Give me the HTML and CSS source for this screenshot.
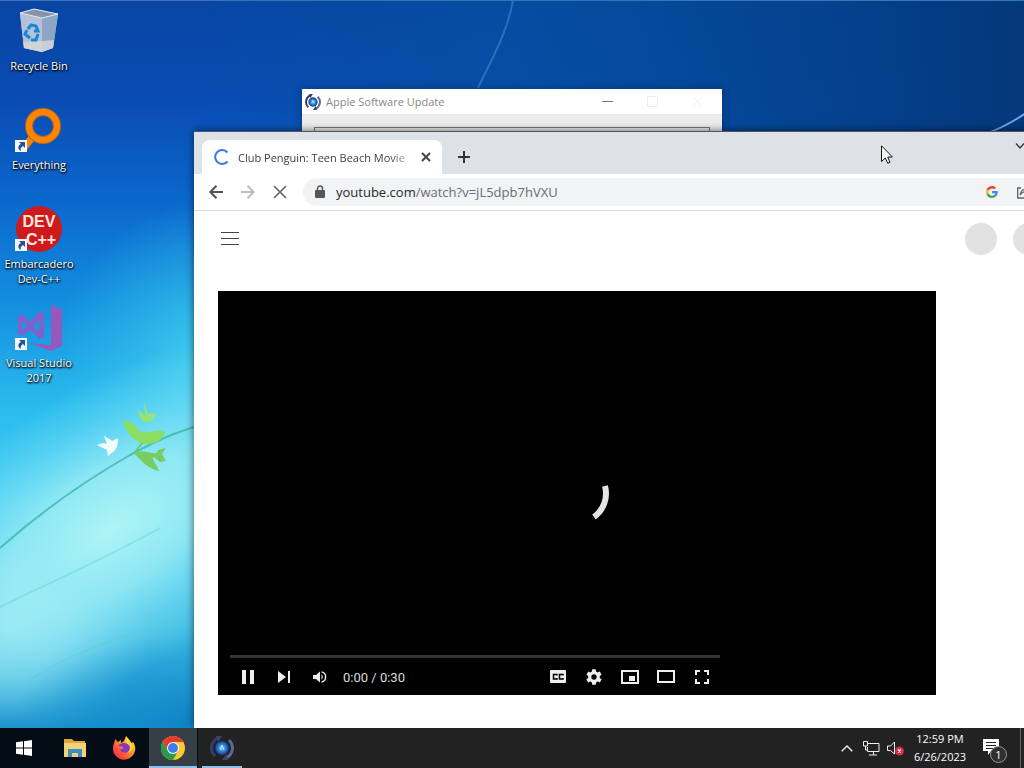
FILE: index.html
```html
<!DOCTYPE html>
<html lang="en">
<head>
  <meta charset="UTF-8" />
  <title>Desktop</title>
  <meta name="viewport" content="width=device-width, initial-scale=1.0" />
  <link rel="stylesheet" href="styles.css">
</head>
<body>
  <main class="desktop">
    <svg class="wallpaper" viewBox="0 0 1024 728" preserveAspectRatio="xMinYMin slice" aria-hidden="true">
      <defs>
        <linearGradient id="sky" x1="0" y1="0" x2="0" y2="1">
          <stop offset="0" stop-color="#0845a3" />
          <stop offset=".14" stop-color="#0a4cb4" />
          <stop offset=".28" stop-color="#0b68cd" />
          <stop offset=".42" stop-color="#148fdf" />
          <stop offset=".56" stop-color="#2abcee" />
          <stop offset=".7" stop-color="#47cef2" />
          <stop offset=".86" stop-color="#3fbce5" />
          <stop offset="1" stop-color="#168bca" />
        </linearGradient>
        <linearGradient id="dusk" x1="0" y1="0" x2="1" y2="0">
          <stop offset=".2" stop-color="#04509c" stop-opacity="0" />
          <stop offset=".5" stop-color="#0450a0" stop-opacity=".7" />
          <stop offset=".8" stop-color="#04418c" stop-opacity=".9" />
          <stop offset="1" stop-color="#04387a" />
        </linearGradient>
        <radialGradient id="glow">
          <stop offset="0" stop-color="#b4f7f5" stop-opacity=".95" />
          <stop offset=".4" stop-color="#a6f1f6" stop-opacity=".75" />
          <stop offset=".7" stop-color="#96ecf8" stop-opacity=".35" />
          <stop offset="1" stop-color="#8feaf8" stop-opacity="0" />
        </radialGradient>
        <radialGradient id="lagoon">
          <stop offset="0" stop-color="#4ad6f0" stop-opacity=".85" />
          <stop offset="1" stop-color="#35c8ee" stop-opacity="0" />
        </radialGradient>
        <radialGradient id="deep">
          <stop offset="0" stop-color="#0f83c6" />
          <stop offset="1" stop-color="#1f9fd6" stop-opacity="0" />
        </radialGradient>
        <filter id="soft"><feGaussianBlur stdDeviation=".7" /></filter>
      </defs>
      <rect width="1024" height="728" fill="url(#sky)" />
      <rect width="1024" height="300" fill="url(#dusk)" />
      <ellipse cx="215" cy="360" rx="160" ry="160" fill="url(#lagoon)" />
      <ellipse cx="110" cy="530" rx="280" ry="140" transform="rotate(-34 110 530)" fill="url(#glow)" />
      <ellipse cx="10" cy="630" rx="140" ry="110" fill="url(#glow)" opacity=".6" />
      <ellipse cx="190" cy="725" rx="180" ry="90" fill="url(#deep)" />
      <g filter="url(#soft)">
        <path d="M0 548C45 508 90 478 130 455C158 440 172 434 194 427" fill="none" stroke="#3cb8a4" stroke-width="2" opacity=".8" />
        <path d="M135 452L146 438" stroke="#6fc870" stroke-width="2" />
        <path d="M0 607C60 578 110 556 160 528M30 680C90 640 150 632 194 612" fill="none" stroke="#55cfc9" stroke-width="2" opacity=".35" />
        <path d="M123 421C128 420 135 424 140 431C147 436 157 427 165 432C163 440 156 444 148 444C138 444 126 435 123 421Z" fill="#8cde62" />
        <path d="M138 409L145 416L144 402L148 414L156 413C154 421 149 423 145 422C141 420 139 416 138 409Z" fill="#97e56f" />
        <path d="M134 453C143 449 150 454 157 453L158 450L166 448L162 454L166 461L160 462L154 457C150 457 157 465 159 471C149 469 142 462 134 453Z" fill="#77cd5e" />
        <path d="M97 445C102 443 105 443 107 444L104 436C109 439 110 439 112 441L118 438C118 444 117 449 113 452L108 456L107 450Z" fill="#f1fdff" />
      </g>
      <path d="M513 0C507 34 492 58 478 88" fill="none" stroke="#4b93d2" stroke-width="2" opacity=".5" />
      <path d="M988 133C1004 127 1014 121 1026 113" fill="none" stroke="#6aa5e6" stroke-width="2" />
      <rect width="1024" height="1" fill="#3a74b8" />
    </svg>

    <nav class="shortcuts" aria-label="Desktop shortcuts">
      <a class="shortcut" href="#recycle-bin">
        <svg viewBox="0 0 48 48" aria-hidden="true">
          <path d="M5 6L19 2L43 7L38 41L27 45L9 41Z" fill="#aebfd6" />
          <path d="M5 7L27 11V45L9 41Z" fill="#b3c2d8" />
          <path d="M27 11L43 7L38 41L27 45Z" fill="#8ea6c5" />
          <path d="M8 35L27 34L39 33L38 41L27 45L9 41Z" fill="#d8d9d6" opacity=".8" />
          <path d="M5 6L19 2L43 7L27 11Z" fill="#8794ac" stroke="#e3eaf1" />
          <path d="M13 22L16 18L21 19L23 24L19 24M23 27L21 33L16 33M15 31L10 27L12 23" fill="none" stroke="#1887d8" stroke-width="3" />
        </svg>
        <span>Recycle Bin</span>
      </a>
      <a class="shortcut" href="#everything">
        <svg viewBox="0 0 48 48" aria-hidden="true">
          <path d="M20 28L8 43" stroke="#ff8500" stroke-width="7" />
          <circle cx="28" cy="20" r="14" fill="none" stroke="#b66a22" stroke-width="8" />
          <circle cx="28" cy="20" r="14" fill="none" stroke="#ff8500" stroke-width="6" />
          <use href="#link-arrow" />
        </svg>
        <span>Everything</span>
      </a>
      <a class="shortcut" href="#dev-cpp">
        <svg viewBox="0 0 48 48" aria-hidden="true">
          <circle cx="24" cy="24" r="23" fill="#cf1a1d" />
          <g class="dev-letters"><text x="24" y="22">DEV</text><text x="26" y="40">C++</text></g>
          <use href="#link-arrow" />
        </svg>
        <span>Embarcadero Dev-C++</span>
      </a>
      <a class="shortcut" href="#visual-studio">
        <svg viewBox="0 0 48 48" aria-hidden="true">
          <path d="M36 1L47 5V42L36 47L14 39L36 41Z" fill="#9558bd" />
          <path d="M3 12L7 10L15 18L25 7L29 9V33L25 35L15 26L7 32L3 30ZM7 16V27L12 22ZM24 16L18 22L24 28Z" fill="#8160c9" fill-rule="evenodd" />
          <g id="link-arrow">
            <rect y="34" width="12" height="12" fill="#f4f7fb" />
            <path d="M4 36H10V42L8 40C6 41 5 43 6 45C2 43 3 39 6 38Z" fill="#274f9c" />
          </g>
        </svg>
        <span>Visual Studio 2017</span>
      </a>
    </nav>

    <section class="window updater" aria-label="Apple Software Update">
      <header class="updater-title">
        <svg width="16" height="16" viewBox="0 0 24 24" aria-hidden="true"><use href="#apple-update" /></svg>
        <h2>Apple Software Update</h2>
        <button aria-label="Minimize"><svg width="11" height="11"><path d="M0 5.500H11" stroke="#777" /></svg></button>
        <button aria-label="Maximize"><svg width="11" height="11"><path d="M.5.500H10.500V10.500H.5Z" fill="none" stroke="#ececec" /></svg></button>
        <button aria-label="Close"><svg width="11" height="11"><path d="M1 1L10 10M10 1L1 10" stroke="#f0f0f0" /></svg></button>
      </header>
      <div class="updater-panel"></div>
    </section>

    <section class="window browser" aria-label="Browser">
      <header class="tab-strip">
        <div class="tab">
          <svg width="16" height="16" viewBox="0 0 16 16" aria-hidden="true"><path d="M13.500 3.500A7 7 0 1 0 13.500 12.500" fill="none" stroke="#3b78e0" stroke-width="2" /></svg>
          <span class="tab-title">Club Penguin: Teen Beach Movie</span>
          <button aria-label="Close tab"><svg width="10" height="10"><path d="M1 1L9 9M9 1L1 9" stroke="#444" stroke-width="2" /></svg></button>
        </div>
        <button class="new-tab" aria-label="New tab"><svg width="12" height="12"><path d="M6 0V12M0 6H12" stroke="#333" stroke-width="2" /></svg></button>
        <div class="caption-buttons">
          <button aria-label="Search tabs"><svg width="10" height="6"><path d="M1 0.500L5 5L9 0.500" fill="none" stroke="#333" stroke-width="1.300" /></svg></button>
          <button aria-label="Minimize"></button>
          <button aria-label="Maximize"></button>
          <button aria-label="Close"></button>
        </div>
      </header>
      <div class="toolbar">
        <button aria-label="Back"><svg width="14" height="14"><path d="M14 7H1.500M7.500 .8L1.300 7L7.500 13.200" fill="none" stroke="#505357" stroke-width="2" /></svg></button>
        <button aria-label="Forward"><svg width="14" height="14"><path d="M0 7H12.500M6.500 .8L12.700 7L6.500 13.200" fill="none" stroke="#b9bbbe" stroke-width="2" /></svg></button>
        <button aria-label="Stop loading"><svg width="14" height="14"><path d="M1 1L13 13M13 1L1 13" stroke="#606368" stroke-width="1.600" /></svg></button>
        <div class="omnibox">
          <svg width="10" height="14" aria-hidden="true"><rect y="5" width="10" height="8" rx="1" fill="#54585d" /><path d="M2.500 6V3.500A2.500 2.500 0 0 1 7.500 3.500V6" fill="none" stroke="#54585d" stroke-width="1.500" /></svg>
          <a class="url" href="#watch">youtube.com<span>/watch?v=jL5dpb7hVXU</span></a>
          <button aria-label="Google">
            <svg width="12" height="12" viewBox="0 0 48 48">
              <path fill="#ea4335" d="M24 9.500c3.500 0 6.700 1.200 9.200 3.600l6.900-6.900C35.900 2.400 30.500 0 24 0 14.600 0 6.500 5.400 2.600 13.200l8 6.200C12.400 13.700 17.700 9.500 24 9.500z" />
              <path fill="#4285f4" d="M47 24.600c0-1.600-.2-3.100-.4-4.600H24v9h12.900c-.6 3-2.300 5.500-4.800 7.200l7.700 6C44.400 38 47 31.800 47 24.600z" />
              <path fill="#fbbc05" d="M10.500 28.600A14.500 14.500 0 0 1 10.500 19.400l-8-6.200a24 24 0 0 0 0 21.600z" />
              <path fill="#34a853" d="M24 48c6.500 0 12-2.100 15.900-5.800l-7.700-6c-2.200 1.500-5 2.300-8.200 2.300-6.300 0-11.600-4.200-13.500-9.900l-8 6.200C6.500 42.600 14.600 48 24 48z" />
            </svg>
          </button>
          <button aria-label="Share"><svg width="14" height="14"><path d="M4 3H.7V13H11V10M3 10C4 6 6 4 9 4V1L13 5L9 9V6.500C6 6.500 4.500 8 3 10" fill="none" stroke="#5f6368" stroke-width="1.300" /></svg></button>
          <button aria-label="Bookmark"></button>
        </div>
      </div>
      <div class="page">
        <div class="masthead">
          <button aria-label="Menu"><svg width="18" height="14"><path d="M0 .5H18M0 6.500H18M0 12.500H18" stroke="#444" /></svg></button>
          <i class="dot"></i><i class="dot"></i><i class="dot"></i><i class="dot"></i>
        </div>
        <div class="player">
          <svg class="spinner" width="66" height="66" viewBox="0 0 66 66" aria-hidden="true"><path d="M61 26A29 29 0 0 1 50 57" fill="none" stroke="#e4e4e4" stroke-width="6" /></svg>
          <div class="player-bottom">
            <div class="progress"></div>
            <div class="controls">
              <button aria-label="Pause"><svg width="12" height="14"><path d="M0 0H4V14H0ZM8 0H12V14H8Z" /></svg></button>
              <button aria-label="Next"><svg width="12" height="12"><path d="M0 0L8 6L0 12ZM10 0H12V12H10Z" /></svg></button>
              <button aria-label="Mute"><svg width="14" height="12"><path d="M0 4H3L7 .5V11.500L3 8H0ZM8.500 3Q11 6 8.500 9Z" /><path d="M8.500 .9C14 2 14 10 8.500 11.100" fill="none" stroke="#eee" stroke-width="1.400" /></svg></button>
              <span class="time">0:00 / 0:30</span>
              <button aria-label="Subtitles"><svg width="16" height="14"><rect width="16" height="13" rx="1" /><path d="M7 5.500V4.500H3.500V9H7V8M13 5.500V4.500H9.500V9H13V8" fill="none" stroke="#000" stroke-width="1.500" /></svg></button>
              <button aria-label="Settings"><svg width="16" height="16" viewBox="4 3 18 18"><path d="M19.400 13a7 7 0 0 0 0-2l2.100-1.600-2-3.500-2.500 1a7 7 0 0 0-1.700-1L15 3.300h-4l-.4 2.600a7 7 0 0 0-1.700 1l-2.400-1-2 3.500L6.500 11a7 7 0 0 0 0 2l-2.100 1.600 2 3.500 2.500-1a7 7 0 0 0 1.700 1l.4 2.600h4l.4-2.600a7 7 0 0 0 1.700-1l2.500 1 2-3.500zM13 15a3 3 0 1 1 0-6 3 3 0 0 1 0 6z" /></svg></button>
              <button aria-label="Miniplayer"><svg width="18" height="14"><path d="M1 1H17V13H1Z" fill="none" stroke="#eee" stroke-width="2" /><rect x="8" y="6" width="6" height="5" /></svg></button>
              <button aria-label="Theater mode"><svg width="18" height="14"><path d="M1 1H17V12H1Z" fill="none" stroke="#eee" stroke-width="2" /></svg></button>
              <button aria-label="Full screen"><svg width="14" height="14"><path d="M1 5V1H5M9 1H13V5M13 9V13H9M5 13H1V9" fill="none" stroke="#eee" stroke-width="2" /></svg></button>
            </div>
          </div>
        </div>
      </div>
    </section>

    <svg class="cursor" width="12" height="19" viewBox="0 0 12 19" aria-hidden="true"><path d="M.5 .8V16.500L4.300 13L6.800 18.300L9 17.300L6.700 12H11.400Z" fill="#fff" stroke="#111" /></svg>
  </main>

  <footer class="taskbar">
    <button aria-label="Start"><svg width="16" height="16"><path d="M0 2.300L7 1.300V7.500H0ZM8 1.200L16 0V7.500H8ZM0 8.500H7V14.700L0 13.700ZM8 8.500H16V16L8 14.800Z" fill="#fff" /></svg></button>
    <button aria-label="File Explorer">
      <svg width="22" height="18"><path d="M0 0H8L10 2H21V18H0Z" fill="#dca63c" /><path d="M0 4H22V18H0Z" fill="#f5d272" /><path d="M4 10H18V18H14V14H8V18H4Z" fill="#398fc8" /></svg>
    </button>
    <button aria-label="Firefox">
      <svg width="24" height="24" viewBox="0 0 24 24">
        <defs><linearGradient id="fire" x1="1" y1="0" x2="0" y2="1"><stop offset="0" stop-color="#fff04a" /><stop offset=".4" stop-color="#ff9a28" /><stop offset=".75" stop-color="#ff433e" /><stop offset="1" stop-color="#e4217b" /></linearGradient></defs>
        <path d="M1 13C1 8 3 6 3 3L6 6L9 4L9 7C12 6 13 3 14 0C16 2 18 4 19 7L21 6C24 10 24 15 21 19C17 25 8 25 4 20C2 18 1 16 1 13Z" fill="url(#fire)" />
        <path d="M6 10C9 6 15 6 18 10C18 16 14 18 10 16C7 15 8 13 12 12C9 10 8 10 6 10Z" fill="#833bbd" />
        <path d="M14 1C13 5 14 7 17 9C19 12 18 15 16 17C21 15 22 10 19 7C18 4 16 3 14 1Z" fill="#ffd43b" />
      </svg>
    </button>
    <button class="active" aria-label="Chrome">
      <svg width="24" height="24" viewBox="0 0 24 24">
        <circle cx="12" cy="12" r="12" fill="#fdc92d" />
        <path d="M1.600 6A12 12 0 0 1 22.400 6H12L6.800 15Z" fill="#e33b2e" />
        <path d="M1.600 6A12 12 0 0 0 12 24L17.200 15H6.800Z" fill="#259b4c" />
        <circle cx="12" cy="12" r="6" fill="#fff" /><circle cx="12" cy="12" r="5" fill="#3c7de6" />
      </svg>
    </button>
    <button class="running" aria-label="Apple Software Update">
      <svg width="24" height="24" viewBox="0 0 24 24">
        <defs><radialGradient id="globe"><stop offset="0" stop-color="#8fd4ff" /><stop offset=".5" stop-color="#2f86e0" /><stop offset="1" stop-color="#143a86" /></radialGradient></defs>
        <g id="apple-update">
          <path d="M8 2A11 11 0 0 0 5 20" fill="none" stroke="#343d6c" stroke-width="3" />
          <path d="M16 22A11 11 0 0 0 19 4" fill="none" stroke="#5d6794" stroke-width="3" />
          <path d="M6 0H12L8 6ZM12 24H18L16 18Z" fill="#39436c" />
          <circle cx="12" cy="12" r="7" fill="url(#globe)" />
          <path d="M10 14L12 9L14 14" fill="none" stroke="#d5f0ff" opacity=".8" />
        </g>
      </svg>
    </button>
    <div class="tray">
      <button aria-label="Show hidden icons"><svg width="12" height="7"><path d="M.7 6.300L6 1L11.300 6.300" fill="none" stroke="#eee" stroke-width="1.400" /></svg></button>
      <button aria-label="Network"><svg width="17" height="15"><path d="M4.500 2.500H16V10.500H4.500V6M10.500 10.500V14M6 14H14M.5 .5H4.500V5H.5ZM2.500 5V9H4" fill="none" stroke="#eee" /></svg></button>
      <button aria-label="Volume muted"><svg width="17" height="15"><path d="M.5 5H3.500L7.500 1V13L3.500 9.500H.5Z" fill="none" stroke="#eee" /><circle cx="12.500" cy="10" r="4.500" fill="#d22d43" /><path d="M11 8.500L14 11.500M14 8.500L11 11.500" stroke="#fff" stroke-width="1.200" /></svg></button>
    </div>
    <time class="clock" datetime="2023-06-26T12:59">12:59 PM<br>6/26/2023</time>
    <button class="notifications" aria-label="Notifications">
      <svg width="18" height="18"><path d="M0 0H16V12H8L5 16V12H0Z" fill="#fff" /><path d="M3 3.500H13M3 6.500H13M3 9.500H10" stroke="#222" /></svg>
      <span class="badge">1</span>
    </button>
    <button class="peek" aria-label="Show desktop"></button>
  </footer>
</body>
</html>
```
FILE: styles.css
```css
* {
  box-sizing: border-box;
}
body {
  margin: 0;
  height: 100vh;
  display: flex;
  flex-direction: column;
  overflow: hidden;
  font-family: "Open Sans", "Noto Sans", sans-serif;
  font-size: 11px;
}
button {
  display: flex;
  align-items: center;
  justify-content: center;
  flex: none;
  padding: 0;
  border: 0;
  background: none;
  color: inherit;
  font: inherit;
}
a {
  color: inherit;
  text-decoration: none;
}
svg {
  flex: none;
}

.desktop {
  position: relative;
  flex: 1;
  overflow: hidden;
}
.wallpaper {
  position: absolute;
  inset: 0;
  width: 100%;
  height: 100%;
}

/* shortcuts */
.shortcuts {
  position: relative;
  display: grid;
  grid-auto-rows: 99px;
  width: 78px;
}
.shortcut {
  display: flex;
  flex-direction: column;
  align-items: center;
  gap: 3px;
  padding-top: 7px;
  color: #fff;
  line-height: 15px;
  text-align: center;
  text-shadow: 1px 1px 2px #000, 0 1px 2px #000;
}
.shortcut svg {
  width: 48px;
  height: 48px;
}
.dev-letters {
  fill: #ffe9df;
  font-family: "Liberation Sans", sans-serif;
  font-size: 16px;
  font-weight: 700;
  text-anchor: middle;
  text-shadow: none;
}

/* windows */
.window {
  position: absolute;
}
.updater {
  left: 302px;
  top: 89px;
  width: 420px;
  height: 400px;
  background: #ececec;
  box-shadow: 0 0 8px rgba(0,0,0,0.3);
}
.updater-title {
  display: flex;
  align-items: center;
  height: 25px;
  padding: 0 2px 0 3px;
  background: #fff;
  color: #888;
}
.updater-title h2 {
  flex: 1;
  margin: 0 0 0 5px;
  font-size: 11px;
  font-weight: 400;
}
.updater-title button {
  width: 45px;
  height: 25px;
}
.updater-panel {
  height: 300px;
  margin: 13px 12px;
  border: 1px solid #777;
}

.browser {
  left: 194px;
  right: -157px;
  top: 131px;
  bottom: 0;
  border-top: 1px solid #4d5661;
  background: #fff;
  box-shadow: 0 0 8px rgba(0,0,0,0.6);
}
.tab-strip {
  display: flex;
  align-items: flex-end;
  height: 42px;
  padding-left: 8px;
  background: #dee1e6;
}
.tab {
  display: flex;
  align-items: center;
  gap: 8px;
  width: 240px;
  height: 34px;
  padding: 0 8px 0 12px;
  border-radius: 8px 8px 0 0;
  background: #fff;
  color: #3c4043;
}
.tab-title {
  flex: 1;
  overflow: hidden;
  white-space: nowrap;
  mask-image: linear-gradient(90deg, #000 88%, rgba(0,0,0,0.3));
}
.tab button {
  width: 16px;
  height: 16px;
}
.new-tab {
  width: 28px;
  height: 34px;
  margin-left: 8px;
}
.caption-buttons {
  display: flex;
  align-self: flex-start;
  margin-left: auto;
}
.caption-buttons button {
  width: 46px;
  height: 28px;
}

.toolbar {
  display: flex;
  align-items: center;
  height: 37px;
  padding: 0 40px 0 6px;
  border-bottom: 1px solid #d9dbde;
}
.toolbar button {
  width: 32px;
  height: 28px;
}
.omnibox {
  display: flex;
  align-items: center;
  flex: 1;
  height: 28px;
  margin-left: 7px;
  padding: 0 69px 0 12px;
  border-radius: 14px;
  background: #f1f3f4;
}
.url {
  flex: 1;
  margin-left: 11px;
  color: #27292c;
  font-size: 13px;
}
.url span {
  color: #6b6e72;
}

/* page */
.masthead {
  display: flex;
  align-items: center;
  gap: 16px;
  height: 56px;
  padding: 0 40px 0 27px;
}
.masthead button {
  margin-right: auto;
}
.dot {
  width: 32px;
  height: 32px;
  border-radius: 50%;
  background: #e2e2e2;
}
.player {
  display: flex;
  flex-direction: column;
  justify-content: flex-end;
  position: relative;
  max-width: 718px;
  aspect-ratio: 16 / 9;
  margin: 24px;
  padding: 0 12px;
  background: #000;
}
.spinner {
  position: absolute;
  inset: 0;
  margin: auto;
}
.player-bottom {
  width: 490px;
}
.progress {
  height: 3px;
  background: #343434;
}
.controls {
  display: flex;
  align-items: center;
  height: 37px;
  padding-top: 1px;
  color: #ddd;
  fill: #eee;
}
.controls button {
  width: 36px;
  height: 36px;
  fill: inherit;
}
.time {
  flex: 1;
  padding: 2px 0 0 5px;
  font-family: Roboto, sans-serif;
  font-size: 13px;
}
.cursor {
  position: absolute;
  left: 881px;
  top: 145px;
}

/* taskbar */
.taskbar {
  display: flex;
  gap: 1px;
  height: 40px;
  background: linear-gradient(90deg, #040d15 0 198px, #222 198px);
  color: #fff;
}
.taskbar > button {
  width: 48px;
  height: 40px;
}
.taskbar > button:first-child {
  margin-right: 2px;
}
.taskbar > .active {
  border-bottom: 2px solid #88c2ed;
  padding-top: 2px;
  background: #363f46;
}
.running {
  position: relative;
}
.running::after {
  content: "";
  position: absolute;
  left: 4px;
  right: 4px;
  bottom: 0;
  height: 2px;
  background: #88c2ed;
}
.tray {
  display: flex;
  align-items: center;
  margin-left: auto;
}
.tray button {
  width: 24px;
  height: 24px;
}
.clock {
  align-self: center;
  width: 64px;
  line-height: 18px;
  text-align: center;
}
.taskbar > .notifications {
  position: relative;
  justify-content: flex-start;
  width: 46px;
  padding-left: 10px;
}
.badge {
  position: absolute;
  left: 17px;
  top: 18px;
  width: 17px;
  height: 17px;
  border: 1px solid #999;
  border-radius: 50%;
  background: #303030;
  line-height: 15px;
}
.taskbar > .peek {
  width: 4px;
  border-left: 1px solid #666;
}
```
